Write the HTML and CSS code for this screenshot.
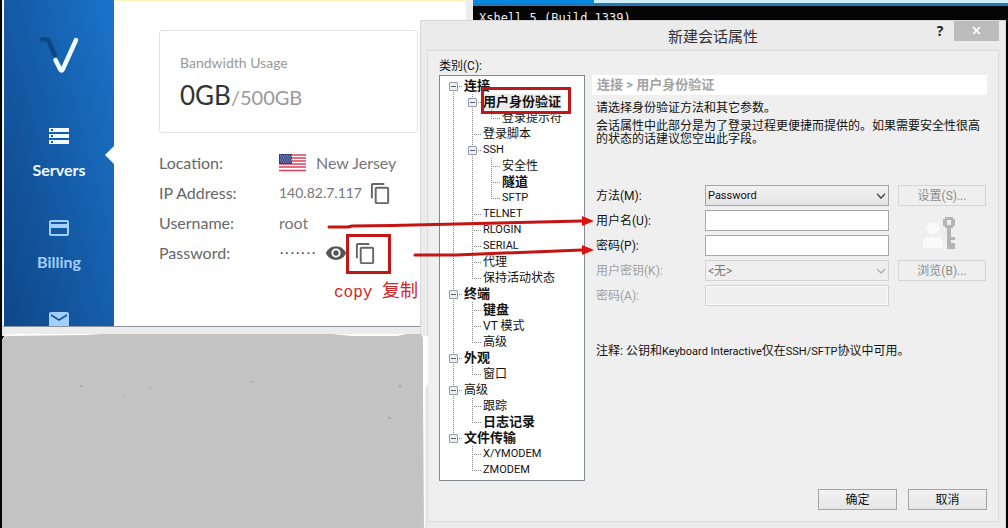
FILE: index.html
```html
<!DOCTYPE html>
<html lang="zh-CN">
<head>
<meta charset="utf-8">
<title>新建会话属性</title>
<link rel="stylesheet" href="styles.css">
</head>
<body>
<div class="desktop">

  <section class="terminal" aria-label="Xshell">
    <div class="terminal-tabs"><span class="tab-blue"></span><span class="tab-light"></span></div>
    <p class="terminal-text">Xshell 5 (Build 1339)</p>
  </section>

  <section class="browser" aria-label="Servers">
    <div class="page">
      <nav class="sidebar">
        <svg class="logo" viewBox="0 0 40 40" aria-hidden="true">
          <path d="M3 4.500h4.500q1.500 0 2.200 1.500l6 14" fill="none" stroke="#0b4a80" stroke-width="4.500" stroke-linecap="round"/>
          <path d="M16.500 25l4.800 9.500q1.200 1.800 2.400 0L37 5" fill="none" stroke="#f2fbff" stroke-width="4.500" stroke-linecap="round" stroke-linejoin="round"/>
        </svg>
        <a class="nav-item active" href="#servers">
          <svg class="nav-icon" viewBox="0 0 24 24" aria-hidden="true"><path d="M2 20h20v-4H2v4zm2-3h2v2H4v-2zM2 4v4h20V4H2zm4 3H4V5h2v2zm-4 7h20v-4H2v4zm2-3h2v2H4v-2z"/></svg>
          <span>Servers</span>
        </a>
        <a class="nav-item" href="#billing">
          <svg class="nav-icon" viewBox="0 0 24 24" aria-hidden="true"><path d="M20 4H4c-1.110 0-1.990.890-1.990 2L2 18c0 1.110.890 2 2 2h16c1.110 0 2-.890 2-2V6c0-1.110-.890-2-2-2zm0 14H4v-6h16v6zm0-10H4V6h16v2z"/></svg>
          <span>Billing</span>
        </a>
        <a class="nav-item" href="#support" aria-label="Support">
          <svg class="nav-icon" viewBox="0 0 24 24" aria-hidden="true"><path d="M20 4H4c-1.100 0-1.990.900-1.990 2L2 18c0 1.100.900 2 2 2h16c1.100 0 2-.900 2-2V6c0-1.100-.900-2-2-2zm0 4l-8 5-8-5V6l8 5 8-5v2z"/></svg>
        </a>
      </nav>
      <main class="server">
        <div class="usage">
          <div class="usage-label">Bandwidth Usage</div>
          <div class="usage-value"><span class="used">0GB</span>/500GB</div>
        </div>
        <dl class="facts">
          <dt>Location:</dt>
          <dd>
            <svg class="flag" viewBox="0 0 27 18" aria-hidden="true">
              <rect width="27" height="18" rx="1" fill="#fff"/>
              <path d="M0 1h27M0 4h27M0 7h27M0 10h27M0 13h27M0 16.500h27" stroke="#d8415a" stroke-width="1.600"/>
              <rect width="13" height="10" fill="#34407e"/>
              <path d="M1 2h12M2 4h11M1 6h12M2 8h11" stroke="#c9cde6" stroke-width="1" stroke-dasharray="1 1.200"/>
            </svg>
            <span class="place">New Jersey</span>
          </dd>
          <dt>IP Address:</dt>
          <dd>
            <span class="ip">140.82.7.117</span>
            <button class="icon-button" type="button" aria-label="Copy IP address"><svg class="copy" viewBox="0 0 24 24" aria-hidden="true"><path d="M16 1H4c-1.100 0-2 .900-2 2v14h2V3h12V1zm3 4H8c-1.100 0-2 .900-2 2v14c0 1.100.900 2 2 2h11c1.100 0 2-.900 2-2V7c0-1.100-.900-2-2-2zm0 16H8V7h11v14z"/></svg></button>
          </dd>
          <dt>Username:</dt>
          <dd>root</dd>
          <dt>Password:</dt>
          <dd>
            <span class="mask">·······</span>
            <button class="icon-button" type="button" aria-label="Show password"><svg class="eye" viewBox="0 0 24 24" aria-hidden="true"><path d="M12 4.500C7 4.500 2.730 7.610 1 12c1.730 4.390 6 7.500 11 7.500s9.270-3.110 11-7.500c-1.730-4.390-6-7.500-11-7.500zM12 17c-2.760 0-5-2.240-5-5s2.240-5 5-5 5 2.240 5 5-2.240 5-5 5zm0-8c-1.660 0-3 1.340-3 3s1.340 3 3 3 3-1.340 3-3-1.340-3-3-3z"/></svg></button>
            <button class="icon-button" type="button" aria-label="Copy password"><svg class="copy" viewBox="0 0 24 24" aria-hidden="true"><path d="M16 1H4c-1.100 0-2 .900-2 2v14h2V3h12V1zm3 4H8c-1.100 0-2 .900-2 2v14c0 1.100.900 2 2 2h11c1.100 0 2-.900 2-2V7c0-1.100-.900-2-2-2zm0 16H8V7h11v14z"/></svg></button>
          </dd>
        </dl>
      </main>
    </div>
  </section>

  <p class="note-copy">copy <span class="note-cjk">复制</span></p>

  <section class="dialog" role="dialog" aria-labelledby="dialog-title">
    <header class="titlebar">
      <h1 id="dialog-title">新建会话属性</h1>
      <button class="help" type="button">?</button>
      <button class="close" type="button" aria-label="关闭"><svg viewBox="0 0 8 8" aria-hidden="true"><path d="M1 1l6 6M7 1l-6 6" stroke="#fff" stroke-width="1.500"/></svg></button>
    </header>
    <form class="panel">
      <div class="category">类别(C):</div>
      <div class="columns">
        <ul class="tree">
          <li><div class="node"><button class="toggle" type="button" aria-label="折叠"></button><b>连接</b></div>
            <ul>
              <li><div class="node"><button class="toggle" type="button" aria-label="折叠"></button><b class="selected">用户身份验证</b></div>
                <ul><li><div class="node leaf">登录提示符</div></li></ul>
              </li>
              <li><div class="node leaf">登录脚本</div></li>
              <li><div class="node"><button class="toggle" type="button" aria-label="折叠"></button><span class="latin">SSH</span></div>
                <ul>
                  <li><div class="node leaf">安全性</div></li>
                  <li><div class="node leaf"><b>隧道</b></div></li>
                  <li><div class="node leaf latin">SFTP</div></li>
                </ul>
              </li>
              <li><div class="node leaf latin">TELNET</div></li>
              <li><div class="node leaf latin">RLOGIN</div></li>
              <li><div class="node leaf latin">SERIAL</div></li>
              <li><div class="node leaf">代理</div></li>
              <li><div class="node leaf">保持活动状态</div></li>
            </ul>
          </li>
          <li><div class="node"><button class="toggle" type="button" aria-label="折叠"></button><b>终端</b></div>
            <ul>
              <li><div class="node leaf"><b>键盘</b></div></li>
              <li><div class="node leaf">VT 模式</div></li>
              <li><div class="node leaf">高级</div></li>
            </ul>
          </li>
          <li><div class="node"><button class="toggle" type="button" aria-label="折叠"></button><b>外观</b></div>
            <ul><li><div class="node leaf">窗口</div></li></ul>
          </li>
          <li><div class="node"><button class="toggle" type="button" aria-label="折叠"></button>高级</div>
            <ul>
              <li><div class="node leaf">跟踪</div></li>
              <li><div class="node leaf"><b>日志记录</b></div></li>
            </ul>
          </li>
          <li><div class="node"><button class="toggle" type="button" aria-label="折叠"></button><b>文件传输</b></div>
            <ul>
              <li><div class="node leaf latin">X/YMODEM</div></li>
              <li><div class="node leaf latin">ZMODEM</div></li>
            </ul>
          </li>
        </ul>
        <div class="settings">
          <h2>连接 &gt; 用户身份验证</h2>
          <div class="intro">
            <p>请选择身份验证方法和其它参数。</p>
            <p>会话属性中此部分是为了登录过程更便捷而提供的。如果需要安全性很高的状态的话建议您空出此字段。</p>
          </div>
          <div class="fields">
            <label for="method">方法(M):</label>
            <div class="picker">
              <select id="method" class="latin"><option>Password</option></select>
              <svg viewBox="0 0 8 6" aria-hidden="true"><path d="M0 0l4 4 4-4v2L4 6 0 2z"/></svg>
            </div>
            <button class="push" type="button" disabled>设置(S)...</button>

            <label for="user">用户名(U):</label>
            <input id="user" type="text">
            <svg class="userkey" viewBox="0 0 34 34" shape-rendering="crispEdges" aria-hidden="true">
              <path d="M8 7h6v1h2v2h1v5h-1v2h-2v1H8v-1H6v-2H5v-5h1V8h2zM4 21h14v1h2v2h1v8H1v-8h1v-2h2z" fill="#fafafa"/>
              <path d="M23 1h8v2h2v7h-2v2h-2v9h4v3h-4v3h4v6h-8V12h-2v-2h-2V3h2zM25 4v5h4V4z" fill="#b4b4b4" fill-rule="evenodd"/>
            </svg>

            <label for="pass">密码(P):</label>
            <input id="pass" type="password">

            <label class="off" for="userkey">用户密钥(K):</label>
            <div class="picker off">
              <select id="userkey" disabled><option>&lt;无&gt;</option></select>
              <svg viewBox="0 0 8 6" aria-hidden="true"><path d="M0 0l4 4 4-4v2L4 6 0 2z"/></svg>
            </div>
            <button class="push" type="button" disabled>浏览(B)...</button>

            <label class="off" for="phrase">密码(A):</label>
            <input id="phrase" type="password" disabled>
          </div>
          <p class="remark">注释: 公钥和<span class="latin">Keyboard Interactive</span>仅在<span class="latin">SSH/SFTP</span>协议中可用。</p>
        </div>
      </div>
      <footer class="actions">
        <button class="push" type="submit">确定</button>
        <button class="push" type="button">取消</button>
      </footer>
    </form>
  </section>

  <svg class="cover" viewBox="0 0 428 194" aria-hidden="true">
    <path d="M0 6Q2 0 8 0H400L426 2V50L423 54V194H0z" fill="#fff"/>
    <path d="M0 194V6Q2 2 6 2L85 1 100 0H330L350 2 395 2 405 0H419L421 4V60L422 194z" fill="#c3c3c3"/>
    <path d="M79 51v2M122 61l1 1M148 54l1 1M249 47l1 2M398 51v3M386 84h3" stroke="#8f8f8f"/>
  </svg>

  <svg class="arrows" viewBox="0 0 270 44" aria-hidden="true">
    <path d="M3 12H22L26 11 66 10.500 256 6M89 40L130 40 256 35" fill="none" stroke="#c41414" stroke-width="3" stroke-linecap="round" stroke-linejoin="round"/>
    <path d="M256 1L268 6 256 11zM256 30L268 35 256 40z" fill="#e01010"/>
  </svg>
  <div class="mark mark-tree"></div>
  <div class="mark mark-copy"></div>
</div>
</body>
</html>
```

FILE: styles.css
```css
* { box-sizing: border-box; }

body, h1, h2, p, ul, dl, dd { margin: 0; }

body {
  font: 12px/16px Roboto, "Noto Sans CJK SC", sans-serif;
  color: #111;
}

button, input, select { font: inherit; color: inherit; }

.desktop {
  position: relative;
  min-height: 100vh;
  overflow: hidden;
  background: #050505;
}

/* Terminal behind the dialog */
.terminal {
  position: absolute;
  top: 0;
  left: 473px;
  right: 0;
}

.terminal-tabs {
  display: flex;
  height: 6px;
  border-bottom: 3px solid #2079b5;
}
.tab-blue { width: 121px; background: #0888e0; }
.tab-light { flex: 1; background: #cfeef5; }

.terminal-text {
  padding: 4px 6px;
  font: 12px/16px "DejaVu Sans Mono", monospace;
  color: #eee;
}

/* Browser window */
.browser {
  position: absolute;
  top: 0;
  left: 2px;
  width: 471px;
  height: 336px;
  padding: 0 7px 9px 1px;
  background: #ececec;
}

.page {
  display: flex;
  height: 100%;
  padding-left: 1px;
  border-bottom: 1px solid #8a929b;
  background: #fff;
}

.sidebar {
  display: flex;
  flex: none;
  flex-direction: column;
  align-items: center;
  width: 110px;
  padding-top: 35px;
  overflow: hidden;
  background: linear-gradient(75deg, #0f4688 0%, #155ca8 50%, #1a74ca 100%);
}

.logo { flex: none; width: 40px; height: 40px; }

.nav-item {
  display: flex;
  flex: none;
  flex-direction: column;
  align-items: center;
  gap: 11px;
  width: 100%;
  height: 92px;
  font: 700 16px/22px Lato, sans-serif;
  color: #a3d0ff;
  text-decoration: none;
}
.logo + .nav-item { margin-top: 49px; }
.nav-icon { width: 24px; height: 24px; fill: currentColor; }

.nav-item.active {
  position: relative;
  color: #f2fbff;
}
.nav-item.active::after {
  content: "";
  position: absolute;
  top: 22px;
  right: 0;
  border: 9px solid transparent;
  border-right-color: #fff;
  border-left: 0;
}

.server {
  flex: 1;
  padding: 29px 48px 0 45px;
  border-top: 1px solid #fbf2b5;
  font-family: Lato, sans-serif;
}

.usage {
  height: 103px;
  padding: 21px 20px;
  border: 1px solid #e2e2e2;
  border-radius: 3px;
}
.usage-label { font-size: 14px; line-height: 22px; color: #999; }
.usage-value { margin-top: 4px; font-size: 20px; line-height: 34px; color: #999; }
.used { font-size: 26px; color: #2f3432; }

.facts {
  display: grid;
  grid-template-columns: 120px 1fr;
  grid-auto-rows: 30px;
  align-items: center;
  margin-top: 15px;
  font-size: 16px;
  line-height: 20px;
  color: #666;
  white-space: nowrap;
}
.facts dd { display: flex; align-items: center; color: #777; }
.flag { width: 27px; height: 18px; margin-right: 10px; }
.ip { width: 90px; font-size: 14px; }
.mask { width: 46px; font: 16px/20px "Liberation Sans", sans-serif; color: #444; }

.icon-button {
  display: flex;
  padding: 0;
  border: 0;
  background: none;
  fill: #666;
}
.copy { width: 23px; height: 23px; }
.eye { width: 22px; height: 22px; fill: #555; }
.icon-button + .icon-button { margin-left: 7px; }

.note-copy {
  position: absolute;
  top: 280px;
  left: 334px;
  font: 16px/24px "Liberation Mono", "Noto Sans CJK SC", monospace;
  color: #d02525;
  white-space: nowrap;
}
.note-cjk { font-size: 18px; }

/* Session properties dialog */
.dialog {
  position: absolute;
  top: 20px;
  left: 420px;
  right: 2px;
  padding: 0 6px 6px;
  border: 1px solid #d6d6d6;
  border-bottom: 0;
  background: #ebebeb;
}

.titlebar {
  display: grid;
  grid-template-columns: 1fr 28px 45px;
  align-items: start;
  height: 29px;
}
.titlebar h1 {
  grid-column: 1 / -1;
  grid-row: 1;
  font: 400 15px/29px "Noto Sans CJK SC", sans-serif;
  color: #333;
  text-align: center;
}
.help, .close {
  grid-row: 1;
  height: 20px;
  padding: 0;
  border: 0;
  background: none;
}
.help { grid-column: 2; font: 700 14px/20px "Open Sans", sans-serif; color: #222; }
.close { grid-column: 3; background: #bcbcbc; }
.close svg { width: 9px; height: 9px; }

.panel {
  padding: 6px 11px 11px;
  border: 1px solid #dadada;
  background: #efefef;
}

.category { line-height: 18px; }

.columns { display: flex; gap: 7px; }

.tree, .tree ul { list-style: none; padding: 0; }
.tree {
  flex: none;
  width: 146px;
  padding: 2px 0 2px 8px;
  border: 1px solid #828790;
  background: #fff;
}
.tree ul { padding-left: 19px; }
.tree b { font-size: 13px; }

/* Dotted connectors: vertical on the item, horizontal on the node */
.tree li {
  background: repeating-linear-gradient(#888 0 1px, transparent 1px 2px) 5px 0 / 1px 100% no-repeat;
}
.tree li:last-child { background-size: 1px 8px; }
.tree > li:first-child { background-position: 5px 8px; }
.node {
  display: flex;
  align-items: center;
  height: 16px;
  background: repeating-linear-gradient(90deg, #888 0 1px, transparent 1px 2px) 5px 8px / 9px 1px no-repeat;
  white-space: nowrap;
}
.leaf { padding-left: 16px; }
.latin { font-size: 11px; }
.selected { background: #ececec; }

.toggle {
  width: 9px;
  height: 9px;
  margin: 0 6px 0 1px;
  padding: 0;
  border: 1px solid #919aa5;
  border-radius: 1px;
  background: linear-gradient(#4b5f87, #4b5f87) center / 5px 1px no-repeat, #eef0f2;
}

.settings { flex: 1; min-width: 0; }
.settings h2 {
  padding: 0 5px;
  font-size: 13px;
  line-height: 20px;
  color: #a2a2a2;
  background: #fff;
}
.intro { padding: 7px 4px 0; line-height: 13px; }
.intro p + p { margin-top: 5px; }

.fields {
  display: grid;
  grid-template-columns: 109px 1fr 88px;
  grid-auto-rows: 21px;
  gap: 4px 0;
  align-items: center;
  margin-top: 39px;
  padding: 0 1px 0 4px;
}
.fields > label { grid-column: 1; }
.fields > .picker, .fields > input { grid-column: 2; margin-right: 9px; }
.fields > .push, .userkey { grid-column: 3; }
.off { color: #a0a0a0; }

.fields input {
  height: 21px;
  min-width: 0;
  border: 1px solid #a5a8ad;
  background: #fff;
}
.fields input:disabled {
  border-color: #d2d2d2;
  background: #efefef;
  box-shadow: inset 0 0 0 1px #fafafa;
}

.picker { display: grid; align-items: center; }
.picker select {
  grid-area: 1 / 1;
  width: 100%;
  height: 21px;
  padding: 0 2px;
  border: 1px solid #a5a5a5;
  border-radius: 0;
  appearance: none;
  background: linear-gradient(#f2f2f2, #e4e4e4);
}
.picker select:disabled { border-color: #d2d2d2; background: #efefef; color: #777; opacity: 1; }
.picker svg {
  grid-area: 1 / 1;
  justify-self: end;
  width: 8px;
  height: 6px;
  margin-right: 4px;
  fill: #444;
  pointer-events: none;
}
.picker.off svg { fill: #b0b0b0; }

.userkey { grid-row: 2 / span 2; width: 34px; height: 34px; margin-left: 24px; }

.push {
  height: 21px;
  padding: 0;
  border: 1px solid #a5a5a5;
  background: linear-gradient(#f2f2f2, #e6e6e6);
}
.push:disabled { border-color: #d5d5d5; background: #efefef; color: #8c8c8c; }

.remark { margin-top: 37px; padding-left: 4px; }

.actions {
  display: flex;
  justify-content: flex-end;
  gap: 11px;
  margin-top: 8px;
}
.actions .push { width: 79px; }

/* Painted-over area and red annotations */
.cover {
  position: absolute;
  top: 334px;
  left: 2px;
  width: 428px;
  height: 194px;
}

.arrows {
  position: absolute;
  top: 215px;
  left: 326px;
  width: 270px;
  height: 44px;
  pointer-events: none;
}

.mark {
  position: absolute;
  border: 3px solid #c01818;
  pointer-events: none;
}
.mark-tree { top: 87px; left: 481px; width: 90px; height: 27px; }
.mark-copy { top: 234px; left: 346px; width: 45px; height: 40px; }
```
